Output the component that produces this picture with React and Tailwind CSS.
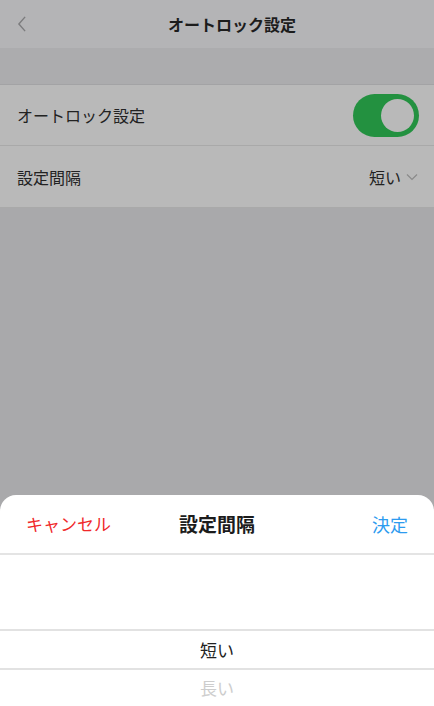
import React, { useState } from 'react';

const font = { fontFamily: '"Noto Sans CJK JP", "Noto Sans", sans-serif' };

const Chevron = ({ className }) => (
  <svg viewBox="0 0 12 8" className={className} fill="none" stroke="currentColor" strokeWidth="1.2">
    <path d="M1 1.5l5 5 5-5" />
  </svg>
);

export default function App() {
  const [autoLock] = useState(true);
  const [interval] = useState('短い');

  return (
    <div className="w-[434px] h-[706px] bg-[#a9a9ab] flex flex-col overflow-hidden" style={font}>
      <div className="h-[48px] bg-[#b4b4b6] flex items-center relative">
        <svg viewBox="0 0 10 18" className="absolute left-[17px] top-[16px] w-[10px] h-[16px] text-[#7c7c7e]" fill="none" stroke="currentColor" strokeWidth="1.6">
          <path d="M8.5 1L1.5 9l7 8" />
        </svg>
        <div className="flex-1 text-center pl-[30px] text-[16px] font-bold text-[#1c1c1c]">オートロック設定</div>
      </div>
      <div className="h-[37px] bg-[#acacae] border-b border-[#a3a3a5]" />
      <div className="bg-[#b9b9b9] border-b border-[#a9a9a9]">
        <div className="h-[61px] flex items-center justify-between pl-[17px] pr-[15px] border-b border-[#a9a9a9]">
          <span className="text-[16px] text-[#222]">オートロック設定</span>
          <div className={`w-[66px] h-[43px] rounded-full ${autoLock ? 'bg-[#239140]' : 'bg-[#999]'} flex items-center justify-end pr-[5px]`}>
            <div className="w-[33px] h-[33px] rounded-full bg-[#b9b9b9]" />
          </div>
        </div>
        <div className="h-[61px] flex items-center justify-between pl-[17px] pr-[16px]">
          <span className="text-[16px] text-[#222]">設定間隔</span>
          <div className="flex items-center gap-[5px]">
            <span className="text-[16px] text-[#222]">{interval}</span>
            <Chevron className="w-[12px] h-[8px] text-[#8a8a8a]" />
          </div>
        </div>
      </div>
      <div className="flex-1" />
      <div className="h-[211px] bg-white rounded-t-[16px] flex flex-col">
        <div className="h-[60px] flex items-center justify-between px-[26px] border-b-2 border-[#e4e4e4]">
          <span className="text-[17px] text-[#f0282a] w-[90px]">キャンセル</span>
          <span className="text-[19px] font-bold text-[#1c1c1c]">設定間隔</span>
          <span className="text-[18px] text-[#2d9bef] w-[90px] text-right">決定</span>
        </div>
        <div className="h-[74px]" />
        <div className="h-[41px] border-y-2 border-[#e2e2e2] flex items-center justify-center text-[17px] text-[#222]">短い</div>
        <div className="flex-1 flex items-center justify-center text-[17px] text-[#cdcdcd]">長い</div>
      </div>
    </div>
  );
}
